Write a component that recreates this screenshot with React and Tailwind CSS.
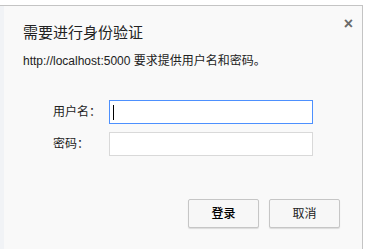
import React from "react";

export default function App() {
  const font = { fontFamily: '"Liberation Sans", "Noto Sans CJK SC", sans-serif' };
  return (
    <div className="w-[365px] h-[249px] bg-white pt-[5px] overflow-hidden" style={font}>
      <div className="w-[363px] h-[244px] border-t border-r border-[#c4c4c4] flex">
        <div className="w-[4px] h-full bg-[#f1f3f6]" />
        <div className="relative flex-1 bg-[#f9f9f9] pl-[19px] pr-[21px] flex flex-col">
          <button className="absolute right-[9px] top-[10px] text-[#6a6a6a] text-[16px] font-bold leading-none">×</button>
          <div className="mt-[17px] h-[20px] leading-[20px] text-[15px] text-[#222]">需要进行身份验证</div>
          <div className="mt-[10px] h-[16px] leading-[16px] text-[12px] text-[#222]">http://localhost:5000 要求提供用户名和密码。</div>
          <div className="mt-[31px] flex flex-col gap-[8px]">
            <div className="flex items-center">
              <div className="w-[86px] pl-[30px] text-[12px] text-[#222]">用户名：</div>
              <div className="relative w-[204px] h-[24px] border border-[#4d90fe] bg-white">
                <div className="absolute left-[3px] top-[4px] w-px h-[15px] bg-black" />
              </div>
            </div>
            <div className="flex items-center">
              <div className="w-[86px] pl-[30px] text-[12px] text-[#222]">密码：</div>
              <div className="w-[204px] h-[24px] border border-[#d9d9d9] bg-white" />
            </div>
          </div>
          <div className="mt-[43px] flex justify-end gap-[10px] pr-[1px]">
            <button className="w-[71px] h-[29px] rounded-[2px] border border-[#c6c6c6] bg-[#f7f7f7] shadow-[0_1px_1px_rgba(0,0,0,0.12)] text-[12px] text-black font-medium">登录</button>
            <button className="w-[71px] h-[29px] rounded-[2px] border border-[#c6c6c6] bg-[#f7f7f7] shadow-[0_1px_1px_rgba(0,0,0,0.12)] text-[12px] text-[#222]">取消</button>
          </div>
        </div>
      </div>
    </div>
  );
}
